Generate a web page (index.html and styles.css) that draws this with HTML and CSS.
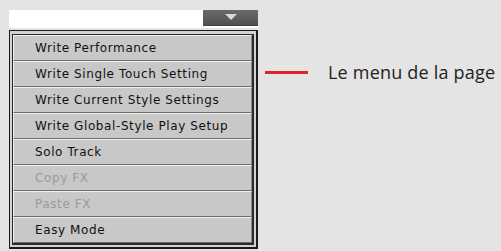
FILE: index.html
```html
<!DOCTYPE html>
<html>
<head>
<meta charset="utf-8">
<link rel="stylesheet" href="styles.css">
</head>
<body>
<div class="page">
  <div class="panel">
    <div class="topbar">
      <div class="field"></div>
      <div class="dropbtn"><span class="tri"></span></div>
    </div>
    <div class="menu">
      <div class="menu-inner">
        <div class="item">Write Performance</div>
        <div class="item">Write Single Touch Setting</div>
        <div class="item">Write Current Style Settings</div>
        <div class="item">Write Global-Style Play Setup</div>
        <div class="item">Solo Track</div>
        <div class="item disabled">Copy FX</div>
        <div class="item disabled">Paste FX</div>
        <div class="item">Easy Mode</div>
      </div>
    </div>
  </div>
  <div class="callout">
    <span class="line"></span>
    <span class="label">Le menu de la page</span>
  </div>
</div>
</body>
</html>
```
FILE: styles.css
```css
html, body {
  margin: 0;
  padding: 0;
  background: #e4e4e4;
  width: 501px;
  height: 251px;
  overflow: hidden;
}
.page {
  display: flex;
  align-items: flex-start;
  padding: 10px 0 0 9px;
}
.panel {
  width: 249px;
  display: flex;
  flex-direction: column;
  gap: 2px;
}
.topbar {
  display: flex;
  height: 18px;
  background: #ffffff;
}
.field {
  flex: 1;
}
.dropbtn {
  width: 55px;
  height: 15px;
  background: linear-gradient(#6a6a6a, #505050);
  border-bottom: 1px solid #3c3c3c;
  display: flex;
  justify-content: center;
  align-items: center;
}
.tri {
  width: 0;
  height: 0;
  border-left: 6px solid transparent;
  border-right: 6px solid transparent;
  border-top: 6px solid #d8d8d8;
  margin-top: -2px;
}
.menu {
  border: 1px solid #1a1a1a;
  border-right-width: 2px;
  border-bottom-width: 2px;
  padding: 3px 2px 2px 2px;
  background: #d2d2d2;
}
.menu-inner {
  border: 1px solid #2a2a2a;
  border-right-width: 2px;
  border-bottom-width: 2px;
  display: flex;
  flex-direction: column;
}
.item {
  height: 24px;
  line-height: 24px;
  background: #c8c8c8;
  border-top: 1px solid #f2f2f2;
  border-bottom: 1px solid #6c6c6c;
  border-left: 1px solid #ececec;
  border-right: 1px solid #8a8a8a;
  padding-left: 21px;
  font-family: "DejaVu Sans", sans-serif;
  font-size: 12px;
  letter-spacing: 0.6px;
  color: #111;
  white-space: nowrap;
}
.item.disabled {
  color: #9a9a9a;
}
.callout {
  display: flex;
  align-items: center;
  margin-top: 50px;
  margin-left: 7px;
}
.line {
  width: 43px;
  height: 3px;
  background: #e0242a;
}
.label {
  margin-left: 20px;
  font-family: "Open Sans", sans-serif;
  font-size: 18px;
  letter-spacing: 0.2px;
  line-height: 25px;
  color: #222;
  white-space: nowrap;
}
```
